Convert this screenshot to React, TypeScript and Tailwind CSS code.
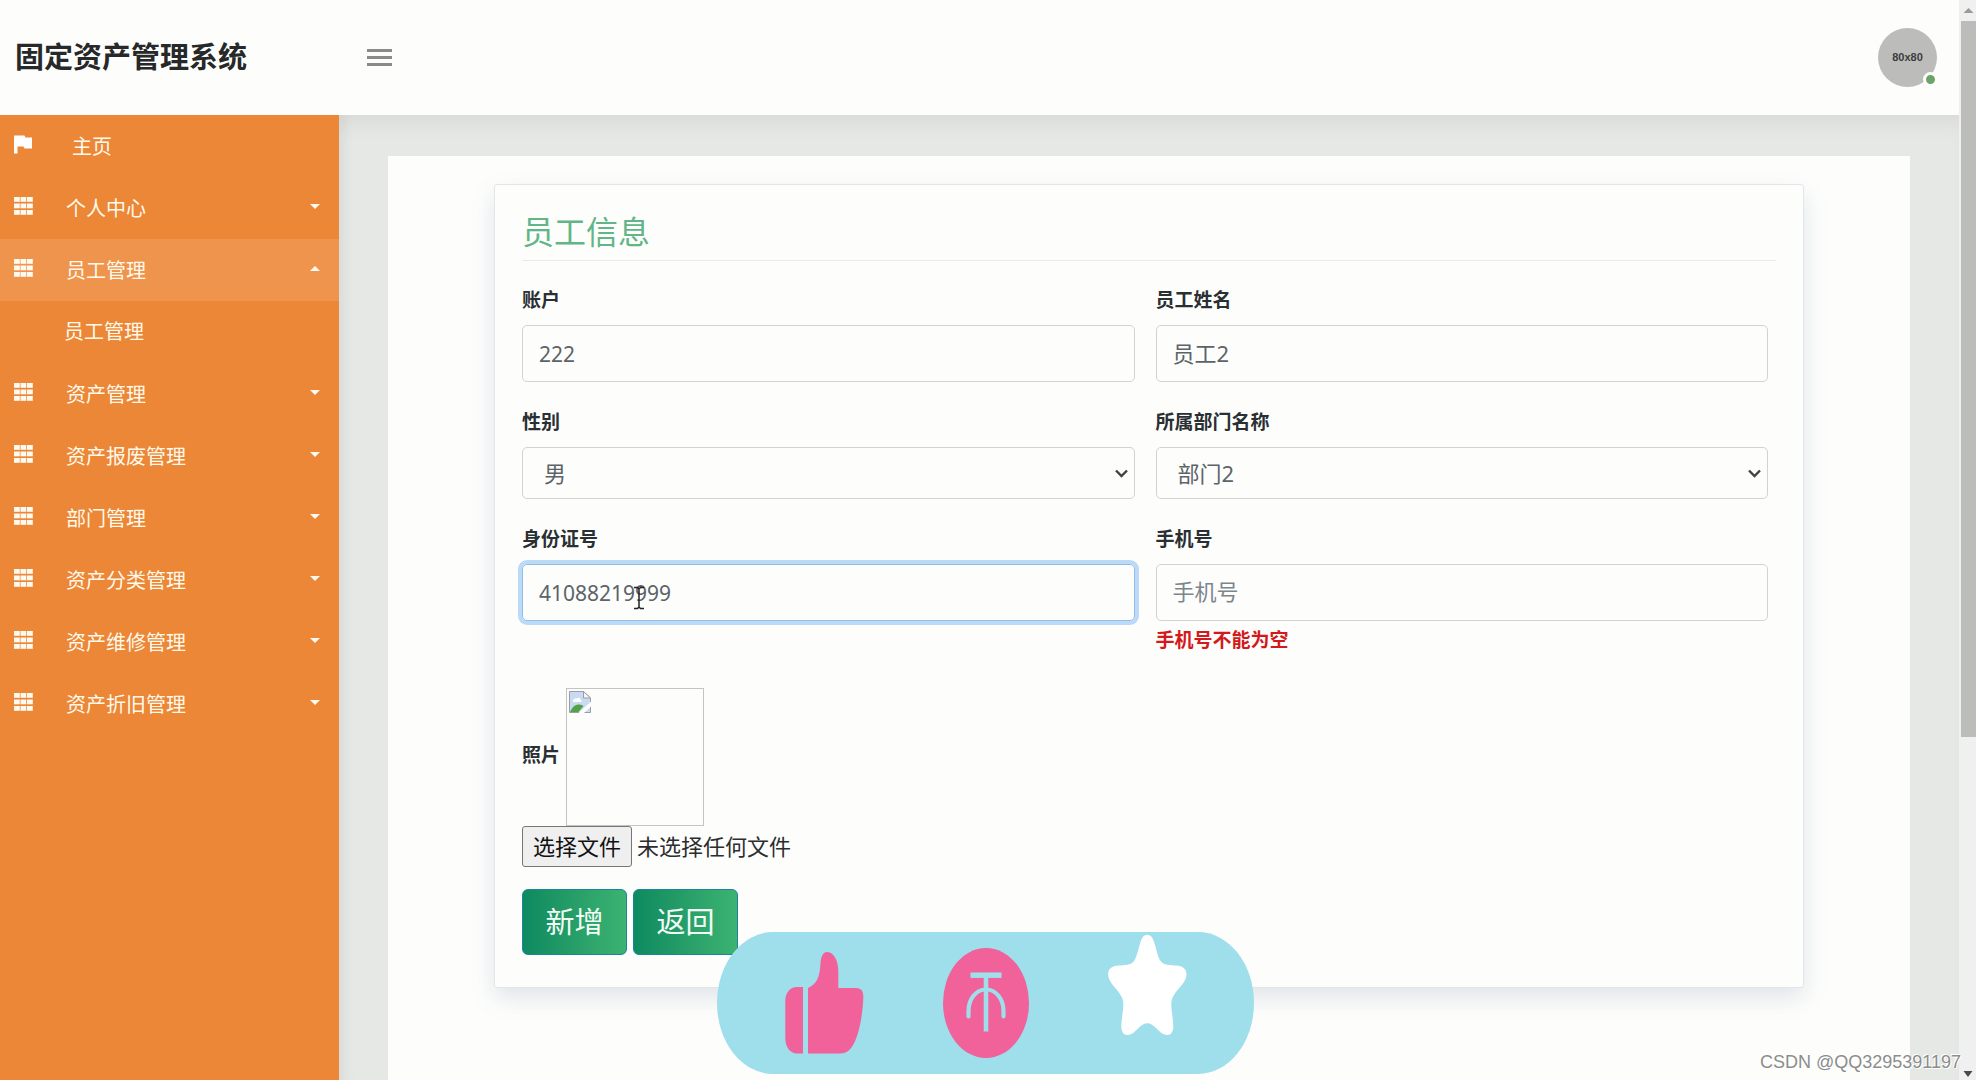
import type { ReactNode } from "react";

const inputClass =
  "h-[57px] w-full rounded-[5px] border border-[#d0d3d4] bg-transparent px-[16px] text-[#5c6369] outline-none placeholder:text-[#7d858c]";

type NavItem = { label: string; open?: boolean; children?: string[] };

const navItems: NavItem[] = [
  { label: "个人中心" },
  { label: "员工管理", open: true, children: ["员工管理"] },
  { label: "资产管理" },
  { label: "资产报废管理" },
  { label: "部门管理" },
  { label: "资产分类管理" },
  { label: "资产维修管理" },
  { label: "资产折旧管理" },
];

function FlagIcon() {
  return (
    <svg width="19" height="19" viewBox="0 0 19 19" fill="#fff" aria-hidden="true">
      <path d="M0 0.5h10.500l1 2h6.500v11h-7.500l-1-2h-6v7h-3.500z" />
    </svg>
  );
}

function GridIcon() {
  return (
    <svg width="19" height="18" viewBox="0 0 19 18" fill="#fffaf0" aria-hidden="true">
      {[0, 6.5, 13].map((y) =>
        [0, 6.5, 13].map((x) => <rect key={`${x}-${y}`} x={x} y={y} width="5.8" height="4.8" />),
      )}
    </svg>
  );
}

function Caret({ up }: { up?: boolean }) {
  return (
    <svg width="10" height="5" viewBox="0 0 10 5" fill="#fffaf0" aria-hidden="true">
      <path d={up ? "M0 5 5 0l5 5z" : "M0 0h10L5 5z"} />
    </svg>
  );
}

function BrokenImageIcon() {
  return (
    <svg width="22" height="22" viewBox="0 0 22 22" aria-hidden="true">
      <path d="M0.5 0.5h14l7 6.500v14.500h-21z" fill="#c9daf3" stroke="#9a9da1" />
      <path d="M14.500 0.500v6.500h7z" fill="#f4f6f8" stroke="#9a9da1" />
      <path d="M4 10c0-2 2-3 3.500-2.300C8.500 6 11.500 6.500 11.500 8.800c1.500 0 1.500 2.200 0 2.200H5c-0.600 0-1-0.400-1-1z" fill="#fff" />
      <path d="M1 21c2-4.500 5-7.500 8.500-7.500 2 0 3.500 0.500 5 1.500L9.500 21z" fill="#55a246" />
      <path d="M9.500 22 22 10.500v5L15 22z" fill="#fff" />
    </svg>
  );
}

function TextCursor() {
  return (
    <svg width="12" height="24" viewBox="0 0 12 24" fill="none" stroke="#222" strokeWidth="1.500" aria-hidden="true">
      <path d="M1 1.500h3.500L6 3l1.500-1.500H11M6 3v18M1 22.500h3.500L6 21l1.500 1.500H11" />
    </svg>
  );
}

function Field({ id, label, error, children }: { id: string; label: string; error?: string; children: ReactNode }) {
  return (
    <div>
      <label htmlFor={id} className="mb-[11px] block text-[19px] leading-[28px] font-bold text-[#2a2f33]">
        {label}
      </label>
      {children}
      {error && (
        <p className="mt-[5px] text-[19px] leading-[28px] font-bold text-[#d3191c]" role="alert">
          {error}
        </p>
      )}
    </div>
  );
}

function SelectBox({ id, value }: { id: string; value: string }) {
  return (
    <div className="relative">
      <select
        id={id}
        defaultValue={value}
        className="h-[52px] w-full appearance-none rounded-[5px] border border-[#d0d3d4] bg-transparent px-[21px] text-[22px] text-[#5c6369] outline-none"
      >
        <option value={value}>{value}</option>
      </select>
      <svg
        className="pointer-events-none absolute top-[22px] right-[7px]"
        width="13"
        height="9"
        viewBox="0 0 13 9"
        fill="none"
        stroke="#3f4346"
        strokeWidth="2.400"
        aria-hidden="true"
      >
        <path d="M1 1.500 6.500 7 12 1.500" />
      </svg>
    </div>
  );
}

function Sidebar() {
  return (
    <aside className="w-[339px] shrink-0 bg-[#eb8737] text-[20px] text-[#fff9ea]">
      <nav>
        <a href="#home" className="flex h-[62px] items-center pl-[14px]">
          <span className="mb-[4px]">
            <FlagIcon />
          </span>
          <span className="ml-[39px] pt-[2px]">主页</span>
        </a>
        {navItems.map((item) => (
          <div key={item.label}>
            <button
              type="button"
              aria-expanded={!!item.open}
              className={`flex h-[62px] w-full items-center pr-[19px] pl-[14px] ${item.open ? "bg-[#ee944d]" : ""}`}
            >
              <span className="mb-[4px]">
                <GridIcon />
              </span>
              <span className="ml-[33px] flex-1 pt-[2px] text-left">{item.label}</span>
              <span className="mb-[3px]">
                <Caret up={item.open} />
              </span>
            </button>
            {item.children?.map((child) => (
              <a key={child} href="#staff" className="flex h-[62px] items-center pl-[64px]">
                {child}
              </a>
            ))}
          </div>
        ))}
      </nav>
    </aside>
  );
}

function Header() {
  return (
    <header className="flex h-[115px] items-center bg-[#fdfefc] pr-[22px] pl-[15px]">
      <h1 className="w-[352px] pb-[2px] text-[29px] font-bold text-[#262829]">固定资产管理系统</h1>
      <button type="button" aria-label="菜单" className="flex w-[25px] flex-col gap-[4px]">
        <span className="h-[3px] bg-[#8a8a8a]" />
        <span className="h-[3px] bg-[#8a8a8a]" />
        <span className="h-[3px] bg-[#8a8a8a]" />
      </button>
      <div className="relative ml-auto flex size-[59px] items-center justify-center rounded-full bg-[#bcbdbb] [font-family:'Liberation_Sans',sans-serif] text-[11px] font-bold text-[#3c3c3c]">
        80x80
        <span className="absolute right-[-1px] bottom-0 size-[15px] rounded-full border-[3px] border-[#fdfefc] bg-[#6ba368]" />
      </div>
    </header>
  );
}

function Reactions() {
  return (
    <svg
      className="absolute bottom-[6px] left-1/2 -ml-[271px]"
      width="537"
      height="142"
      viewBox="0 0 537 142"
      role="img"
      aria-label="点赞 投币 收藏"
    >
      <rect width="537" height="142" rx="56" ry="71" fill="#9fdeeb" />
      <g fill="#f1619a">
        <path d="M86 55h-6c-7 0-11.700 6-11.700 14v37c0 9 4.700 15.500 11.700 15.500h6z" />
        <path d="M91 56c8-3.500 11.500-10 12.300-22 .3-8 2-14 7-14 6.500 0 11 9 11 19v17h17.700c5 0 7.500 3 7.300 9-.3 12-2.300 27-6.300 39-4 12-9 17.500-17 17.500H91z" />
        <ellipse cx="269" cy="71" rx="43" ry="55" />
      </g>
      <g fill="none" stroke="#9fdeeb">
        <path d="M253.500 43.200h31" strokeWidth="5.500" />
        <path d="M269 43v56.500" strokeWidth="4.600" />
        <path
          d="M251.500 84.500V79c0-12 7.500-21.500 17.500-21.500S286.500 67 286.500 79v5.500"
          strokeWidth="4.200"
          strokeLinecap="round"
        />
      </g>
      <path
        fill="#fff"
        d="M430.300 2.700c4 0 6 4 7.500 9.500 2 7 3.500 14 6 17 3.500 4.300 9 3.800 15.500 4.300 7 .5 11 4 10 10.500-1.200 8.500-10.500 13.500-14 22.300-1.800 4.500-.8 11 0 17 .8 7 1.500 11.500.5 15-1.500 5-5.500 6-10 3.500-5.500-3.200-9.500-10.500-15.500-10.500s-10 7.300-15.500 10.500c-4.500 2.500-8.500 1.500-10-3.500-1-3.500-.3-8 .5-15 .8-6 1.800-12.500 0-17-3.500-8.800-12.800-13.800-14-22.300-1-6.500 3-10 10-10.500 6.500-.5 12 0 15.500-4.300 2.500-3 4-10 6-17 1.500-5.500 3.500-9.500 7.500-9.500z"
      />
    </svg>
  );
}

function ScrollTrack() {
  return (
    <div className="flex w-[17px] shrink-0 flex-col items-end bg-[#eff0ef]" aria-hidden="true">
      <svg width="15" height="21" viewBox="0 0 15 21">
        <path d="M2.500 13 7.500 8l5 5z" fill="#9a9a9a" />
      </svg>
      <div className="h-[66.300%] w-[15px] bg-[#bcbdbb]" />
      <svg className="mt-auto" width="15" height="14" viewBox="0 0 15 14">
        <path d="M2.500 5h9l-4.500 6z" fill="#4a4a4a" />
      </svg>
    </div>
  );
}

export default function App() {
  return (
    <div className="relative flex min-h-screen overflow-hidden bg-[#e6e8e5] font-['Noto_Sans','Noto_Sans_CJK_SC',sans-serif]">
      <div className="flex min-w-0 flex-1 flex-col">
        <Header />
        <div className="flex flex-1">
          <Sidebar />
          <main className="flex min-w-0 flex-1 flex-col px-[49px] pt-[41px] shadow-[inset_14px_0_14px_-10px_rgba(0,0,0,0.06),inset_0_20px_20px_-10px_rgba(0,0,0,0.05)]">
            <div className="flex-1 bg-[#fdfefc] px-[106px] pt-[28px]">
              <form
                className="rounded-[3px] border border-[#e3e6e8] bg-[#fdfefc] px-[27px] pt-[24px] pb-[32px] shadow-[0_10px_24px_rgba(60,80,130,0.15)]"
                onSubmit={(e) => e.preventDefault()}
              >
                <h2 className="border-b border-[#e9ebea] pb-[5px] text-[32px] leading-[46px] text-[#62b587]">员工信息</h2>
                <div className="mt-[25px] mr-[8px] grid grid-cols-2 gap-x-[21px] gap-y-[26px]">
                  <Field id="account" label="账户">
                    <input id="account" defaultValue="222" className={`${inputClass} text-[21px]`} />
                  </Field>
                  <Field id="name" label="员工姓名">
                    <input id="name" defaultValue="员工2" className={`${inputClass} pb-[3px] text-[22px]`} />
                  </Field>
                  <Field id="gender" label="性别">
                    <SelectBox id="gender" value="男" />
                  </Field>
                  <Field id="department" label="所属部门名称">
                    <SelectBox id="department" value="部门2" />
                  </Field>
                  <Field id="idcard" label="身份证号">
                    <div className="relative">
                      <input
                        id="idcard"
                        defaultValue="41088219999"
                        className="h-[57px] w-full rounded-[5px] border border-[#8fbfe9] bg-transparent px-[16px] text-[21px] text-[#5c6369] ring-4 ring-[#bcdaf7] outline-none"
                      />
                      <span className="pointer-events-none absolute top-[22px] left-[111px]">
                        <TextCursor />
                      </span>
                    </div>
                  </Field>
                  <Field id="phone" label="手机号" error="手机号不能为空">
                    <input id="phone" placeholder="手机号" className={`${inputClass} pb-[3px] text-[22px]`} />
                  </Field>
                </div>
                <div className="mt-[34px] flex items-center gap-[6px]">
                  <label htmlFor="photo" className="pb-[3px] text-[19px] font-bold text-[#2a2f33]">
                    照片
                  </label>
                  <div className="h-[138px] w-[138px] border border-[#c3c4c4] p-[2px]" role="img" aria-label="照片预览">
                    <BrokenImageIcon />
                  </div>
                </div>
                <div className="flex items-center gap-[5px] text-[22px] text-[#2b2d2f]">
                  <input id="photo" type="file" className="sr-only" />
                  <label
                    htmlFor="photo"
                    className="flex h-[41px] items-center rounded-[3px] border border-[#767676] bg-[#efefef] px-[10px] text-[#111]"
                  >
                    选择文件
                  </label>
                  <span>未选择任何文件</span>
                </div>
                <div className="mt-[22px] flex gap-[6px] text-[29px] text-[#f2fdf5]">
                  <button
                    type="submit"
                    className="h-[66px] w-[105px] rounded-[6px] border border-[#1c83a0] bg-linear-to-r from-[#0b8a60] to-[#3bb371]"
                  >
                    新增
                  </button>
                  <button
                    type="button"
                    className="h-[66px] w-[105px] rounded-[6px] border border-[#1c83a0] bg-linear-to-r from-[#0b8a60] to-[#3bb371]"
                  >
                    返回
                  </button>
                </div>
              </form>
            </div>
          </main>
        </div>
      </div>
      <ScrollTrack />
      <Reactions />
      <p className="absolute right-[15px] bottom-[5px] text-[18px] leading-[26px] text-[#8b8d8b] [font-family:'Liberation_Sans',sans-serif] [text-shadow:1px_1px_0_#fff,-1px_-1px_0_#fff]">
        CSDN @QQ3295391197
      </p>
    </div>
  );
}
